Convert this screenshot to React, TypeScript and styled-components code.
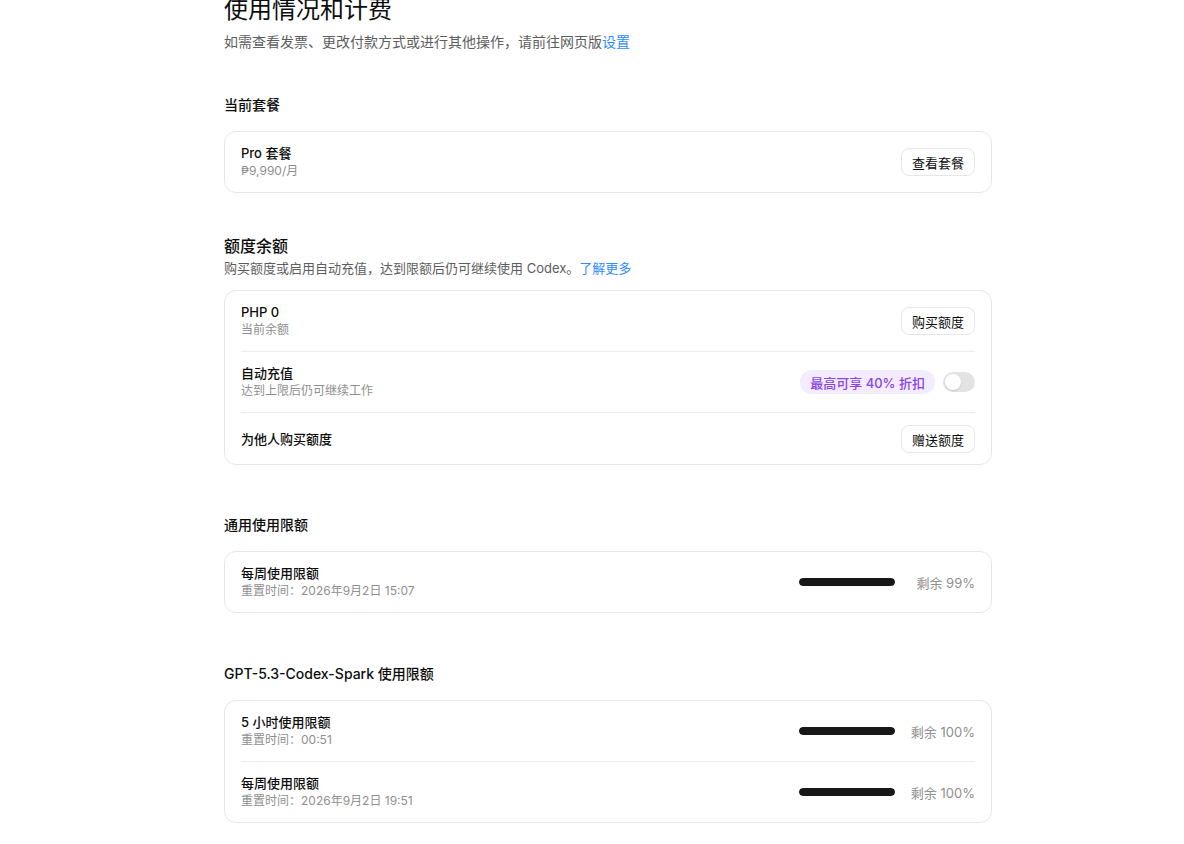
import styled, { createGlobalStyle } from "styled-components";

const GlobalStyle = createGlobalStyle`
    html, body {
        margin: 0;
        padding: 0;
        background: #ffffff;
    }
    body {
        font-family: "Inter", "Noto Sans CJK SC", sans-serif;
        color: #0d0d0d;
        -webkit-font-smoothing: antialiased;
    }
`;

const Page = styled.div`
    padding: 0 0 24px 224px;
`;

const Column = styled.div`
    width: 768px;
    display: flex;
    flex-direction: column;
`;

const PageTitle = styled.h1`
    margin: -6px 0 0;
    font-size: 24px;
    line-height: 32px;
    font-weight: 400;
    color: #0d0d0d;
`;

const PageSub = styled.p`
    margin: 6px 0 0;
    font-size: 14px;
    line-height: 20px;
    color: #5d5d5d;
`;

const Link = styled.a`
    color: #2f8cff;
    text-decoration: none;
`;

const Section = styled.section<{ $top: number }>`
    margin-top: ${(p) => p.$top}px;
    display: flex;
    flex-direction: column;
`;

const SectionTitle = styled.h2<{ $big?: boolean }>`
    margin: 0 0 ${(p) => (p.$big ? 0 : 16)}px;
    font-size: ${(p) => (p.$big ? 16 : 14)}px;
    line-height: ${(p) => (p.$big ? 24 : 20)}px;
    font-weight: 500;
    color: #0d0d0d;
`;

const SectionSub = styled.p`
    margin: 0 0 12px;
    font-size: 13px;
    line-height: 20px;
    color: #5d5d5d;
`;

const Card = styled.div`
    border: 1px solid #e6e6e6;
    border-radius: 12px;
    padding: 0 16px;
`;

const Row = styled.div<{ $compact?: boolean }>`
    display: flex;
    align-items: center;
    justify-content: space-between;
    padding: ${(p) => (p.$compact ? "12px 0 11px" : "12px 0")};
    min-height: 28px;
    & + & {
        border-top: 1px solid #ececec;
    }
`;

const Info = styled.div`
    display: flex;
    flex-direction: column;
`;

const RowTitle = styled.div`
    font-size: 13px;
    line-height: 18px;
    font-weight: 500;
    color: #0d0d0d;
`;

const RowSub = styled.div`
    font-size: 12px;
    line-height: 18px;
    color: #8f8f8f;
`;

const Actions = styled.div`
    display: flex;
    align-items: center;
    gap: 8px;
`;

const Button = styled.button`
    height: 28px;
    padding: 0 10px;
    border: 1px solid #e6e6e6;
    border-radius: 8px;
    background: #ffffff;
    font-family: inherit;
    font-size: 13px;
    color: #0d0d0d;
`;

const Pill = styled.span`
    height: 24px;
    padding: 0 10px;
    border-radius: 12px;
    background: #f3ebfe;
    color: #8a44e8;
    font-size: 13px;
    font-weight: 500;
    display: flex;
    align-items: center;
`;

const Toggle = styled.span`
    width: 32px;
    height: 20px;
    border-radius: 10px;
    background: #e3e3e3;
    position: relative;
    &::after {
        content: "";
        position: absolute;
        left: 2px;
        top: 2px;
        width: 16px;
        height: 16px;
        border-radius: 50%;
        background: #ffffff;
        box-shadow: 0 1px 2px rgba(0, 0, 0, 0.12);
    }
`;

const Meter = styled.div`
    display: flex;
    align-items: center;
    gap: 13px;
`;

const Track = styled.div`
    width: 96px;
    height: 8px;
    border-radius: 4px;
    background: #ececec;
    overflow: hidden;
`;

const Fill = styled.div`
    height: 100%;
    border-radius: 4px;
    background: #181818;
`;

const Remain = styled.span`
    width: 67px;
    text-align: right;
    font-size: 13px;
    color: #8f8f8f;
`;

interface LimitRow {
    title: string;
    reset: string;
    left: number;
}

const generalLimits: LimitRow[] = [
    { title: "每周使用限额", reset: "重置时间：2026年9月2日 15:07", left: 99 },
];

const sparkLimits: LimitRow[] = [
    { title: "5 小时使用限额", reset: "重置时间：00:51", left: 100 },
    { title: "每周使用限额", reset: "重置时间：2026年9月2日 19:51", left: 100 },
];

function LimitCard({ rows }: { rows: LimitRow[] }) {
    return (
        <Card>
            {rows.map((r) => (
                <Row key={r.title}>
                    <Info>
                        <RowTitle>{r.title}</RowTitle>
                        <RowSub>{r.reset}</RowSub>
                    </Info>
                    <Meter>
                        <Track>
                            <Fill style={{ width: `${Math.max(r.left, 100)}%` }} />
                        </Track>
                        <Remain>剩余 {r.left}%</Remain>
                    </Meter>
                </Row>
            ))}
        </Card>
    );
}

export default function App() {
    return (
        <Page>
            <GlobalStyle />
            <Column>
                <PageTitle>使用情况和计费</PageTitle>
                <PageSub>
                    如需查看发票、更改付款方式或进行其他操作，请前往网页版<Link href="#">设置</Link>
                </PageSub>

                <Section $top={43}>
                    <SectionTitle>当前套餐</SectionTitle>
                    <Card>
                        <Row>
                            <Info>
                                <RowTitle>Pro 套餐</RowTitle>
                                <RowSub>₱9,990/月</RowSub>
                            </Info>
                            <Button>查看套餐</Button>
                        </Row>
                    </Card>
                </Section>

                <Section $top={41}>
                    <SectionTitle $big>额度余额</SectionTitle>
                    <SectionSub>
                        购买额度或启用自动充值，达到限额后仍可继续使用 Codex。<Link href="#">了解更多</Link>
                    </SectionSub>
                    <Card>
                        <Row>
                            <Info>
                                <RowTitle>PHP 0</RowTitle>
                                <RowSub>当前余额</RowSub>
                            </Info>
                            <Button>购买额度</Button>
                        </Row>
                        <Row>
                            <Info>
                                <RowTitle>自动充值</RowTitle>
                                <RowSub>达到上限后仍可继续工作</RowSub>
                            </Info>
                            <Actions>
                                <Pill>最高可享 40% 折扣</Pill>
                                <Toggle />
                            </Actions>
                        </Row>
                        <Row $compact>
                            <RowTitle>为他人购买额度</RowTitle>
                            <Button>赠送额度</Button>
                        </Row>
                    </Card>
                </Section>

                <Section $top={50}>
                    <SectionTitle>通用使用限额</SectionTitle>
                    <LimitCard rows={generalLimits} />
                </Section>

                <Section $top={51}>
                    <SectionTitle>GPT-5.3-Codex-Spark 使用限额</SectionTitle>
                    <LimitCard rows={sparkLimits} />
                </Section>
            </Column>
        </Page>
    );
}
